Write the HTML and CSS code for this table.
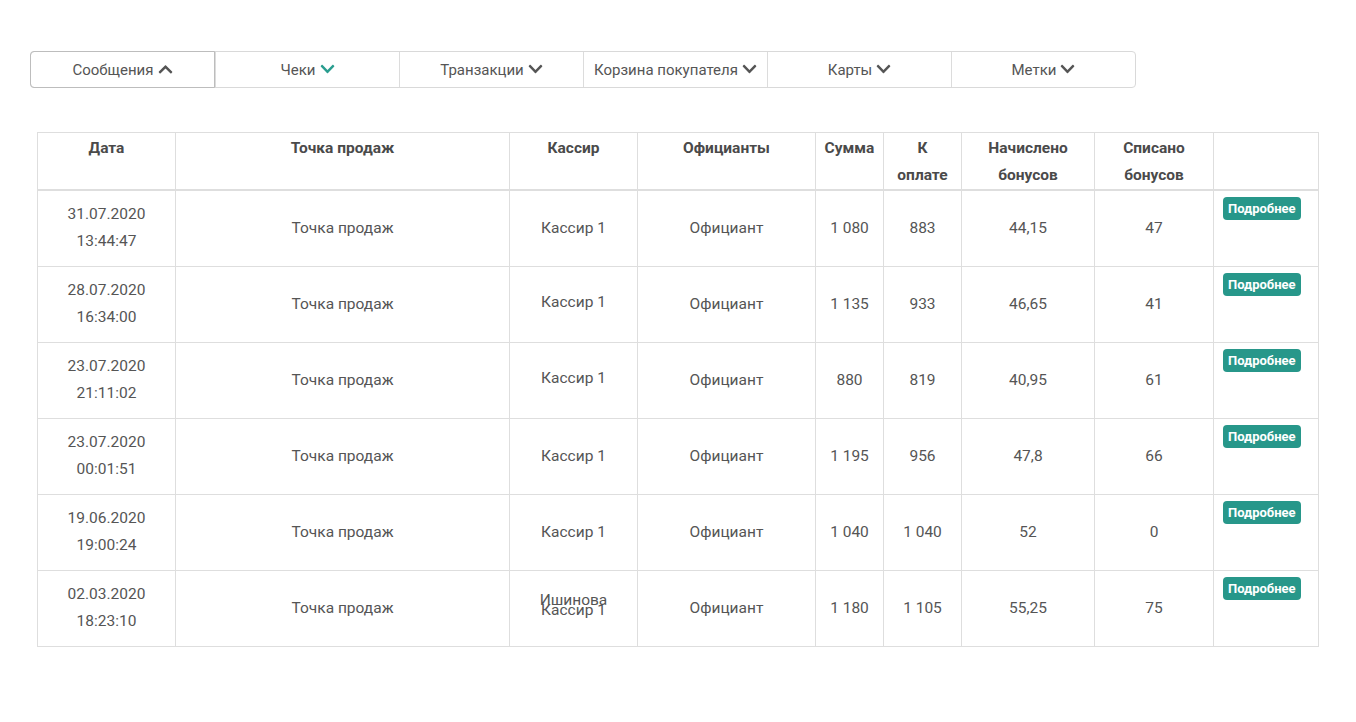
FILE: index.html
```html
<!DOCTYPE html>
<html lang="ru">
<head>
<meta charset="utf-8">
<link rel="stylesheet" href="styles.css">
</head>
<body>
<div class="page">
  <div class="tabs">
    <div class="tab active">Сообщения <svg class="chev" viewBox="0 0 448 512"><path d="M240.97 142.06l194.35 194.35c9.37 9.37 9.37 24.57 0 33.94l-22.67 22.67c-9.36 9.360-24.52 9.37-33.9.04L224 238.7 69.25 393.06c-9.38 9.33-24.54 9.32-33.9-.04l-22.67-22.67c-9.37-9.37-9.37-24.57 0-33.94L207.03 142.06c9.37-9.37 24.57-9.37 33.94 0z"/></svg></div>
    <div class="tab">Чеки <svg class="chev teal" viewBox="0 0 448 512"><path d="M207.03 381.48L12.69 187.13c-9.37-9.37-9.37-24.57 0-33.94l22.67-22.67c9.36-9.36 24.52-9.37 33.9-.04L224 284.7l154.74-154.22c9.38-9.33 24.54-9.32 33.9.04l22.67 22.67c9.37 9.37 9.37 24.57 0 33.94L240.97 381.48c-9.37 9.37-24.57 9.37-33.94 0z"/></svg></div>
    <div class="tab">Транзакции <svg class="chev" viewBox="0 0 448 512"><path d="M207.03 381.48L12.69 187.13c-9.37-9.37-9.37-24.57 0-33.94l22.67-22.67c9.36-9.36 24.52-9.37 33.9-.04L224 284.7l154.74-154.22c9.38-9.33 24.54-9.32 33.9.04l22.67 22.67c9.37 9.37 9.37 24.57 0 33.94L240.97 381.48c-9.37 9.37-24.57 9.37-33.94 0z"/></svg></div>
    <div class="tab">Корзина покупателя <svg class="chev" viewBox="0 0 448 512"><path d="M207.03 381.48L12.69 187.13c-9.37-9.37-9.37-24.57 0-33.94l22.67-22.67c9.36-9.36 24.52-9.37 33.9-.04L224 284.7l154.74-154.22c9.38-9.33 24.54-9.32 33.9.04l22.67 22.67c9.37 9.37 9.37 24.57 0 33.94L240.97 381.48c-9.37 9.37-24.57 9.37-33.94 0z"/></svg></div>
    <div class="tab">Карты <svg class="chev" viewBox="0 0 448 512"><path d="M207.03 381.48L12.69 187.13c-9.37-9.37-9.37-24.57 0-33.94l22.67-22.67c9.36-9.36 24.52-9.37 33.9-.04L224 284.7l154.74-154.22c9.38-9.33 24.54-9.32 33.9.04l22.67 22.67c9.37 9.37 9.37 24.57 0 33.94L240.97 381.48c-9.37 9.37-24.57 9.37-33.94 0z"/></svg></div>
    <div class="tab">Метки <svg class="chev" viewBox="0 0 448 512"><path d="M207.03 381.48L12.69 187.13c-9.37-9.37-9.37-24.57 0-33.94l22.67-22.67c9.36-9.36 24.52-9.37 33.9-.04L224 284.7l154.74-154.22c9.38-9.33 24.54-9.32 33.9.04l22.67 22.67c9.37 9.37 9.37 24.57 0 33.94L240.97 381.48c-9.37 9.37-24.57 9.37-33.94 0z"/></svg></div>
  </div>

  <table class="grid">
    <colgroup>
      <col class="c-date"><col class="c-point"><col class="c-cash"><col class="c-waiter"><col class="c-sum"><col class="c-pay"><col class="c-acc"><col class="c-spent"><col class="c-btn">
    </colgroup>
    <thead>
      <tr>
        <th>Дата</th><th>Точка продаж</th><th>Кассир</th><th>Официанты</th><th>Сумма</th><th>К<br>оплате</th><th>Начислено<br>бонусов</th><th>Списано<br>бонусов</th><th></th>
      </tr>
    </thead>
    <tbody>
      <tr>
        <td>31.07.2020<br>13:44:47</td><td>Точка продаж</td><td>Кассир 1</td><td>Официант</td><td>1 080</td><td>883</td><td>44,15</td><td>47</td><td class="btn-cell"><span class="more">Подробнее</span></td>
      </tr>
      <tr>
        <td>28.07.2020<br>16:34:00</td><td>Точка продаж</td><td class="up">Кассир 1</td><td>Официант</td><td>1 135</td><td>933</td><td>46,65</td><td>41</td><td class="btn-cell"><span class="more">Подробнее</span></td>
      </tr>
      <tr>
        <td>23.07.2020<br>21:11:02</td><td>Точка продаж</td><td class="up">Кассир 1</td><td>Официант</td><td>880</td><td>819</td><td>40,95</td><td>61</td><td class="btn-cell"><span class="more">Подробнее</span></td>
      </tr>
      <tr>
        <td>23.07.2020<br>00:01:51</td><td>Точка продаж</td><td>Кассир 1</td><td>Официант</td><td>1 195</td><td>956</td><td>47,8</td><td>66</td><td class="btn-cell"><span class="more">Подробнее</span></td>
      </tr>
      <tr>
        <td>19.06.2020<br>19:00:24</td><td>Точка продаж</td><td>Кассир 1</td><td>Официант</td><td>1 040</td><td>1 040</td><td>52</td><td>0</td><td class="btn-cell"><span class="more">Подробнее</span></td>
      </tr>
      <tr>
        <td>02.03.2020<br>18:23:10</td><td>Точка продаж</td><td><div class="stack"><div>Ишинова</div><div>Кассир 1</div></div></td><td>Официант</td><td>1 180</td><td>1 105</td><td>55,25</td><td>75</td><td class="btn-cell"><span class="more">Подробнее</span></td>
      </tr>
    </tbody>
  </table>
</div>
</body>
</html>
```

FILE: styles.css
```css
* { box-sizing: border-box; }
html, body { margin: 0; padding: 0; background: #fff; }
body {
  font-family: Roboto, "Noto Sans", "DejaVu Sans", sans-serif;
  color: #555;
}
.page {
  padding: 51px 0 0 30px;
}
.tabs {
  display: flex;
  width: 1106px;
  height: 37px;
  border: 1px solid #d9d9d9;
  border-radius: 4px;
}
.tab {
  flex: 1 1 0;
  display: flex;
  align-items: center;
  justify-content: center;
  gap: 4px;
  font-size: 15px;
  color: #555;
  border-left: 1px solid #dcdcdc;
}
.tab:first-child { border-left: none; }
.tab.active {
  margin: -1px 0 -1px -1px;
  border: 1px solid #bdbdbd;
  border-radius: 4px 0 0 4px;
  flex: 0 0 185px;
}
.chev {
  width: 15px;
  height: 16px;
  fill: #555;
  margin-top: -2px;
}
.chev.teal { fill: #2a9d8f; }

.grid {
  margin: 44px 0 0 7px;
  border-collapse: collapse;
  table-layout: fixed;
  width: 1281px;
}
.c-date { width: 138px; }
.c-point { width: 334px; }
.c-cash { width: 128px; }
.c-waiter { width: 178px; }
.c-sum { width: 68px; }
.c-pay { width: 78px; }
.c-acc { width: 133px; }
.c-spent { width: 119px; }
.c-btn { width: 105px; }

.grid th, .grid td {
  border: 1px solid #dedede;
  text-align: center;
}
.grid th {
  font-size: 15.5px;
  font-weight: 700;
  color: #4a4a4a;
  line-height: 27px;
  padding: 2px 0 0;
  height: 57px;
  vertical-align: top;
  border-bottom: 2px solid #dedede;
}
.grid td {
  font-size: 15.5px;
  line-height: 27px;
  height: 76px;
  padding: 0 2px;
  vertical-align: middle;
}
.grid td.up { padding-bottom: 4px; }
.grid td.btn-cell {
  vertical-align: top;
  text-align: left;
  padding: 6px 0 0 9px;
  line-height: 1;
}
.more {
  display: inline-block;
  background: #27978a;
  color: #fff;
  font-size: 13px;
  font-weight: 700;
  height: 23px;
  line-height: 23px;
  padding: 0 5px;
  border-radius: 4px;
}
.stack {
  line-height: 10px;
  padding-bottom: 6px;
}
```
